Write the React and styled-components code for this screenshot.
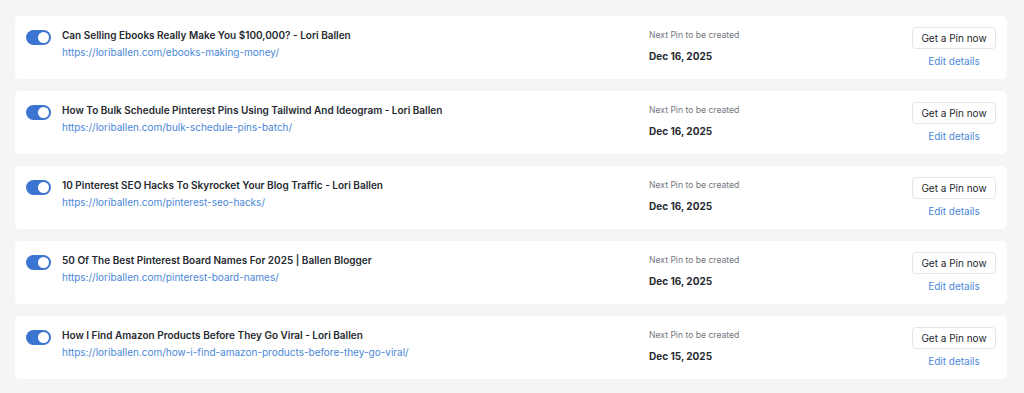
import React from "react";
import styled, { createGlobalStyle } from "styled-components";

const Global = createGlobalStyle`
  html, body { margin: 0; padding: 0; background: #f4f5f7; }
  body { font-family: Inter, "Noto Sans", sans-serif; -webkit-font-smoothing: antialiased; }
  * { box-sizing: border-box; }
`;

const List = styled.div`
  display: flex;
  flex-direction: column;
  gap: 12px;
  padding: 16px 17px 0 15px;
`;

const Card = styled.div`
  background: #ffffff;
  border-radius: 5px;
  height: 63px;
  display: flex;
  align-items: flex-start;
  padding: 11px 11px 0 11px;
`;

const Toggle = styled.div`
  width: 25px;
  height: 15px;
  border-radius: 8px;
  background: ${(p) => (p.$on ? "#3b74d1" : "#c9ccd1")};
  margin-top: 3px;
  flex: none;
  display: flex;
  align-items: center;
  justify-content: ${(p) => (p.$on ? "flex-end" : "flex-start")};
  padding: 0 2px;
`;

const Knob = styled.span`
  width: 11px;
  height: 11px;
  border-radius: 50%;
  background: #ffffff;
`;

const Info = styled.div`
  flex: 1;
  margin-left: 11px;
  display: flex;
  flex-direction: column;
  gap: 1px;
`;

const Title = styled.div`
  font-size: 10px;
  line-height: 16px;
  font-weight: 600;
  color: #262a30;
`;

const Url = styled.a`
  font-size: 10px;
  line-height: 16px;
  color: #4a88d9;
  text-decoration: none;
`;

const Schedule = styled.div`
  width: 263px;
  flex: none;
  display: flex;
  flex-direction: column;
  padding-top: 2px;
`;

const Label = styled.div`
  font-size: 8.6px;
  line-height: 12px;
  color: #72767d;
`;

const DateText = styled.div`
  font-size: 10px;
  line-height: 16px;
  font-weight: 700;
  color: #262a30;
  margin-top: 7px;
`;

const Actions = styled.div`
  width: 84px;
  flex: none;
  display: flex;
  flex-direction: column;
  align-items: center;
`;

const PinButton = styled.button`
  width: 84px;
  height: 22px;
  border: 1px solid #e3e5e9;
  border-radius: 4px;
  background: #ffffff;
  font-family: inherit;
  font-size: 10px;
  color: #23272d;
  padding: 0;
`;

const EditLink = styled.a`
  margin-top: 5px;
  font-size: 10px;
  line-height: 14px;
  color: #4a88d9;
  text-decoration: none;
`;

const items = [
  {
    title: "Can Selling Ebooks Really Make You $100,000? - Lori Ballen",
    url: "https://loriballen.com/ebooks-making-money/",
    date: "Dec 16, 2025",
  },
  {
    title: "How To Bulk Schedule Pinterest Pins Using Tailwind And Ideogram - Lori Ballen",
    url: "https://loriballen.com/bulk-schedule-pins-batch/",
    date: "Dec 16, 2025",
  },
  {
    title: "10 Pinterest SEO Hacks To Skyrocket Your Blog Traffic - Lori Ballen",
    url: "https://loriballen.com/pinterest-seo-hacks/",
    date: "Dec 16, 2025",
  },
  {
    title: "50 Of The Best Pinterest Board Names For 2025 | Ballen Blogger",
    url: "https://loriballen.com/pinterest-board-names/",
    date: "Dec 16, 2025",
  },
  {
    title: "How I Find Amazon Products Before They Go Viral - Lori Ballen",
    url: "https://loriballen.com/how-i-find-amazon-products-before-they-go-viral/",
    date: "Dec 15, 2025",
  },
];

export default function App() {
  return (
    <>
      <Global />
      <List>
        {items.map((it) => (
          <Card key={it.url}>
            <Toggle $on>
              <Knob />
            </Toggle>
            <Info>
              <Title>{it.title}</Title>
              <Url href="#">{it.url}</Url>
            </Info>
            <Schedule>
              <Label>Next Pin to be created</Label>
              <DateText>{it.date}</DateText>
            </Schedule>
            <Actions>
              <PinButton>Get a Pin now</PinButton>
              <EditLink href="#">Edit details</EditLink>
            </Actions>
          </Card>
        ))}
      </List>
    </>
  );
}
